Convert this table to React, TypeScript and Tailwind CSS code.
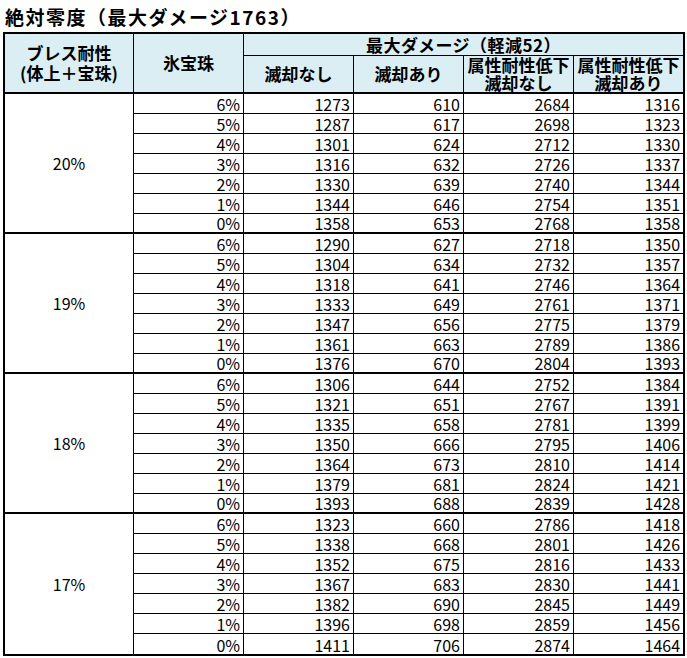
const groups = [
  {
    label: "20%",
    rows: [
      ["6%", 1273, 610, 2684, 1316],
      ["5%", 1287, 617, 2698, 1323],
      ["4%", 1301, 624, 2712, 1330],
      ["3%", 1316, 632, 2726, 1337],
      ["2%", 1330, 639, 2740, 1344],
      ["1%", 1344, 646, 2754, 1351],
      ["0%", 1358, 653, 2768, 1358],
    ],
  },
  {
    label: "19%",
    rows: [
      ["6%", 1290, 627, 2718, 1350],
      ["5%", 1304, 634, 2732, 1357],
      ["4%", 1318, 641, 2746, 1364],
      ["3%", 1333, 649, 2761, 1371],
      ["2%", 1347, 656, 2775, 1379],
      ["1%", 1361, 663, 2789, 1386],
      ["0%", 1376, 670, 2804, 1393],
    ],
  },
  {
    label: "18%",
    rows: [
      ["6%", 1306, 644, 2752, 1384],
      ["5%", 1321, 651, 2767, 1391],
      ["4%", 1335, 658, 2781, 1399],
      ["3%", 1350, 666, 2795, 1406],
      ["2%", 1364, 673, 2810, 1414],
      ["1%", 1379, 681, 2824, 1421],
      ["0%", 1393, 688, 2839, 1428],
    ],
  },
  {
    label: "17%",
    rows: [
      ["6%", 1323, 660, 2786, 1418],
      ["5%", 1338, 668, 2801, 1426],
      ["4%", 1352, 675, 2816, 1433],
      ["3%", 1367, 683, 2830, 1441],
      ["2%", 1382, 690, 2845, 1449],
      ["1%", 1396, 698, 2859, 1456],
      ["0%", 1411, 706, 2874, 1464],
    ],
  },
];

const App = () => {
  return (
    <div className="w-[687px] h-[658px] bg-white text-black font-['Noto_Sans_CJK_JP',sans-serif]">
      {/* title */}
      <div className="h-[32px] pl-[5px] flex items-center text-[19px] font-bold tracking-[1.5px] leading-none">
        絶対零度（最大ダメージ1763）
      </div>

      <div className="ml-[3px] w-[682px] border-2 border-black">
        <table className="w-full table-fixed border-separate border-spacing-0">
          <colgroup>
            <col className="w-[129px]" />
            <col className="w-[110px]" />
            <col className="w-[110px]" />
            <col className="w-[110px]" />
            <col className="w-[110px]" />
            <col className="w-[109px]" />
          </colgroup>
          <thead>
            <tr className="bg-[#daeef3] text-[17px]">
              <th rowSpan={2} className="p-0 border-r border-b-2 border-black font-bold leading-[20px] align-middle">
                ブレス耐性
                <br />
                (体上＋宝珠)
              </th>
              <th rowSpan={2} className="p-0 border-r border-b-2 border-black font-bold align-middle">
                氷宝珠
              </th>
              <th colSpan={4} className="h-[22px] p-0 border-b border-black font-bold tracking-[0.5px] leading-[21px] align-middle">
                最大ダメージ（軽減52）
              </th>
            </tr>
            <tr className="bg-[#daeef3] text-[17px]">
              <th className="h-[36px] p-0 border-r border-b-2 border-black font-bold align-middle">滅却なし</th>
              <th className="p-0 border-r border-b-2 border-black font-bold align-middle">滅却あり</th>
              <th className="p-0 border-r border-b-2 border-black font-bold leading-[18px] align-middle">
                属性耐性低下
                <br />
                滅却なし
              </th>
              <th className="p-0 border-b-2 border-black font-bold leading-[18px] align-middle">
                属性耐性低下
                <br />
                滅却あり
              </th>
            </tr>
          </thead>
          <tbody className="text-[16px]">
            {groups.map((g, gi) => {
              const lastGroup = gi === groups.length - 1;
              return g.rows.map((r, ri) => {
                const endRow = ri === g.rows.length - 1;
                const bottom = endRow ? (lastGroup ? "border-b-0" : "border-b-2") : "border-b";
                return (
                  <tr key={g.label + r[0]}>
                    {ri === 0 && (
                      <td
                        rowSpan={7}
                        className={`p-0 text-center align-middle border-r border-black ${lastGroup ? "" : "border-b-2"}`}
                      >
                        {g.label}
                      </td>
                    )}
                    {r.map((v, ci) => (
                      <td
                        key={ci}
                        className={`h-[20px] p-0 pr-[3px] text-right align-bottom leading-[18px] border-black ${bottom} ${
                          ci === r.length - 1 ? "" : "border-r"
                        }`}
                      >
                        {v}
                      </td>
                    ))}
                  </tr>
                );
              });
            })}
          </tbody>
        </table>
      </div>
    </div>
  );
};

export default App;
